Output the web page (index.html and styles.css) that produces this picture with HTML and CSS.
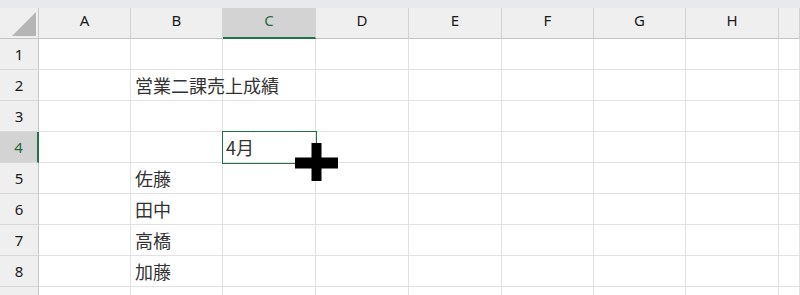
FILE: index.html
```html
<!DOCTYPE html>
<html lang="ja">
<head>
<meta charset="utf-8">
<title>Sheet</title>
<link rel="stylesheet" href="styles.css">
</head>
<body>
<div class="topstrip"></div>
<div class="sheet">
  <div class="row head">
    <div class="corner"><span class="tri"></span></div>
    <div class="ch">A</div><div class="ch">B</div><div class="ch sel">C</div><div class="ch">D</div><div class="ch">E</div><div class="ch">F</div><div class="ch">G</div><div class="ch">H</div><div class="ch"></div>
  </div>
  <div class="row">
    <div class="rh">1</div>
    <div class="c"></div><div class="c"></div><div class="c"></div><div class="c"></div><div class="c"></div><div class="c"></div><div class="c"></div><div class="c"></div><div class="c"></div>
  </div>
  <div class="row">
    <div class="rh">2</div>
    <div class="c"></div><div class="c txt">営業二課売上成績</div><div class="c"></div><div class="c"></div><div class="c"></div><div class="c"></div><div class="c"></div><div class="c"></div><div class="c"></div>
  </div>
  <div class="row">
    <div class="rh">3</div>
    <div class="c"></div><div class="c"></div><div class="c"></div><div class="c"></div><div class="c"></div><div class="c"></div><div class="c"></div><div class="c"></div><div class="c"></div>
  </div>
  <div class="row">
    <div class="rh sel">4</div>
    <div class="c"></div><div class="c"></div><div class="c txt active">4月</div><div class="c"></div><div class="c"></div><div class="c"></div><div class="c"></div><div class="c"></div><div class="c"></div>
  </div>
  <div class="row">
    <div class="rh">5</div>
    <div class="c"></div><div class="c txt">佐藤</div><div class="c"></div><div class="c"></div><div class="c"></div><div class="c"></div><div class="c"></div><div class="c"></div><div class="c"></div>
  </div>
  <div class="row">
    <div class="rh">6</div>
    <div class="c"></div><div class="c txt">田中</div><div class="c"></div><div class="c"></div><div class="c"></div><div class="c"></div><div class="c"></div><div class="c"></div><div class="c"></div>
  </div>
  <div class="row">
    <div class="rh">7</div>
    <div class="c"></div><div class="c txt">高橋</div><div class="c"></div><div class="c"></div><div class="c"></div><div class="c"></div><div class="c"></div><div class="c"></div><div class="c"></div>
  </div>
  <div class="row">
    <div class="rh">8</div>
    <div class="c"></div><div class="c txt">加藤</div><div class="c"></div><div class="c"></div><div class="c"></div><div class="c"></div><div class="c"></div><div class="c"></div><div class="c"></div>
  </div>
  <div class="row">
    <div class="rh"></div>
    <div class="c"></div><div class="c"></div><div class="c"></div><div class="c"></div><div class="c"></div><div class="c"></div><div class="c"></div><div class="c"></div><div class="c"></div>
  </div>
</div>
<svg class="cursor" width="48" height="44" viewBox="0 0 48 44" aria-hidden="true">
  <rect x="2" y="16.5" width="43" height="11" fill="#000"/>
  <rect x="18.5" y="2" width="10" height="38" fill="#000"/>
</svg>
</body>
</html>
```

FILE: styles.css
```css
* { box-sizing: border-box; }
html, body { margin: 0; padding: 0; }
body {
  width: 800px;
  height: 295px;
  overflow: hidden;
  background: #ffffff;
  position: relative;
  font-family: "Noto Sans", "Open Sans", sans-serif;
}
.topstrip {
  height: 8px;
  background: #e7e9ec;
}
.sheet {
  display: flex;
  flex-direction: column;
}
.row {
  display: grid;
  grid-template-columns: 39px 92px 92px 93px 93px 93px 92px 92px 93px 1fr;
  height: 31px;
}
.head { background: #efefef; }
.corner {
  position: relative;
  border-right: 1px solid #c8c8c8;
  border-bottom: 1px solid #c3c3c3;
  background: #efefef;
}
.tri {
  position: absolute;
  right: 2px;
  bottom: 2px;
  width: 0;
  height: 0;
  border-left: 24px solid transparent;
  border-bottom: 24px solid #b5b5b5;
}
.ch {
  display: flex;
  align-items: center;
  justify-content: center;
  padding-bottom: 6px;
  font-size: 15px;
  color: #1a1a1a;
  border-right: 1px solid #d2d2d2;
  border-bottom: 1px solid #c3c3c3;
}
.ch.sel {
  background: #d3d3d3;
  color: #1e6b41;
  border-bottom: 2px solid #217346;
  padding-bottom: 5px;
}
.rh {
  display: flex;
  align-items: center;
  justify-content: center;
  font-size: 15px;
  color: #1a1a1a;
  background: #efefef;
  border-right: 1px solid #c8c8c8;
  border-bottom: 1px solid #d8d8d8;
}
.rh.sel {
  background: #d3d3d3;
  color: #1e6b41;
  border-right: 2px solid #217346;
}
.c {
  border-right: 1px solid #e1e1e1;
  border-bottom: 1px solid #e1e1e1;
}
.txt {
  display: flex;
  align-items: center;
  padding-left: 4px;
  font-family: "Noto Sans CJK JP", "Noto Sans", sans-serif;
  font-size: 18px;
  color: #333333;
  white-space: nowrap;
  overflow: visible;
}
.active {
  position: relative;
  padding-left: 3px;
}
.active::after {
  content: "";
  position: absolute;
  left: -1px;
  top: -1px;
  right: -2px;
  bottom: -2px;
  border: 1px solid #217346;
}
.cursor {
  position: absolute;
  left: 293px;
  top: 141px;
}
```
